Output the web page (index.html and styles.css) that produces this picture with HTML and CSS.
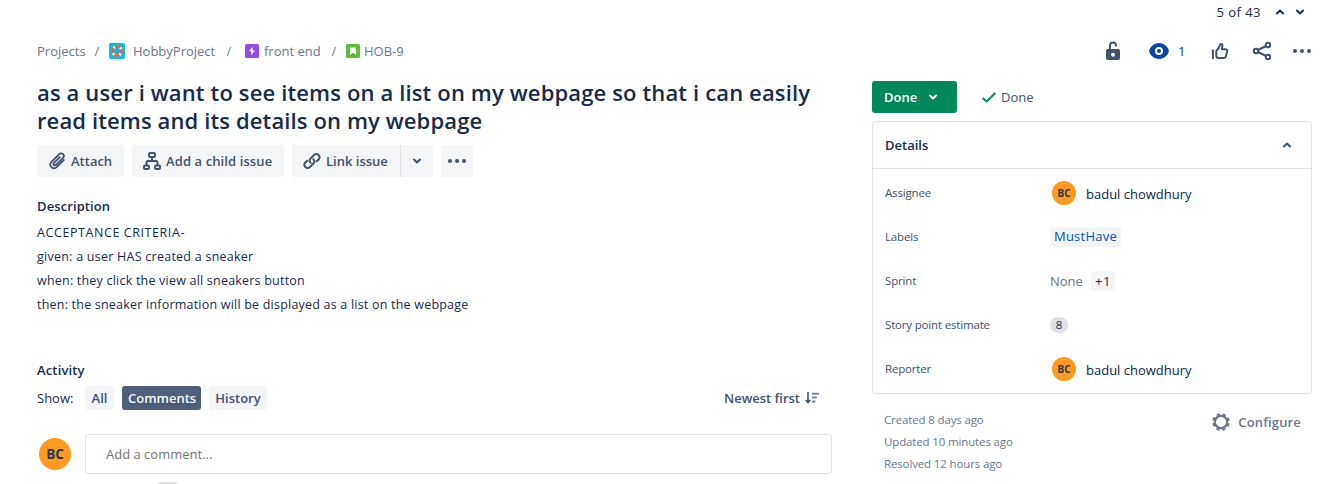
FILE: index.html
```html
<!DOCTYPE html>
<html lang="en">
<head>
<meta charset="utf-8">
<title>HOB-9</title>
<link rel="stylesheet" href="styles.css">
</head>
<body>
<div class="page">
  <div class="pager">
    <span class="pager-text">5 of 43</span>
    <svg class="pager-up" width="10" height="8" viewBox="0 0 10 8"><path d="M2 5.500 5 2.500 8 5.500"/></svg>
    <svg class="pager-down" width="10" height="8" viewBox="0 0 10 8"><path d="M2 2.500 5 5.500 8 2.500"/></svg>
  </div>

  <header class="topbar">
    <nav class="crumbs">
      <span class="crumb c-projects">Projects</span><span class="slash">/</span>
      <svg class="crumb-icon i-hobby" width="16" height="16" viewBox="0 0 16 16"><rect width="16" height="16" rx="2" fill="#00c1e0"/><circle cx="8" cy="8" r="4.500" fill="none" stroke="#ff5a4f" stroke-width="2.800"/><circle cx="8" cy="8" r="4.500" fill="none" stroke="#f4f5f7" stroke-width="2.800" stroke-dasharray="1.800 5.269" stroke-dashoffset="-2.630"/></svg>
      <span class="crumb c-hobby">HobbyProject</span><span class="slash">/</span>
      <svg class="crumb-icon i-epic" width="14" height="14" viewBox="0 0 14 14"><rect width="14" height="14" rx="1.500" fill="#904ee2"/><path d="M7.800 2.800 3.900 7.300H6.400L6.100 11.200 10.100 6.600H7.500Z" fill="#fff"/></svg>
      <span class="crumb c-epic">front end</span><span class="slash">/</span>
      <svg class="crumb-icon i-story" width="14" height="14" viewBox="0 0 14 14"><rect width="14" height="14" rx="1.500" fill="#63ba3c"/><path d="M4 3.500h6v7.600L7 8.400 4 11.100Z" fill="#fff"/></svg>
      <span class="crumb c-key">HOB-9</span>
    </nav>
    <div class="actions">
      <svg class="a-lock" width="16" height="20" viewBox="0 0 16 20"><path d="M5 9V4.500a3 3 0 0 1 6 0V5.500" fill="none" stroke="#42526e" stroke-width="2"/><path fill-rule="evenodd" d="M3 8h10a2 2 0 0 1 2 2v7a2 2 0 0 1-2 2H3a2 2 0 0 1-2-2v-7a2 2 0 0 1 2-2Zm5 3.700a2 2 0 1 0 0 4 2 2 0 0 0 0-4Z" fill="#42526e"/></svg>
      <svg class="a-eye" width="20" height="16" viewBox="0 0 20 16"><path d="M10 0c5 0 9.800 4.500 9.800 8S15 16 10 16 .2 11.500.2 8 5 0 10 0Z" fill="#0747a6"/><circle cx="10" cy="8" r="3" fill="none" stroke="#fff" stroke-width="2"/></svg>
      <span class="watch-count">1</span>
      <svg class="a-like" width="18" height="18" viewBox="0 0 18 18"><g fill="none" stroke="#42526e" stroke-width="2" stroke-linejoin="round"><path d="M1.900 7.500V17"/><path d="M5.300 9V13.500Q5.300 16 7.600 16H12.800Q14.300 16 14.800 14.500L16.200 9.500Q16.700 7.300 14.500 7.200H10.800L11.400 3.600Q11.500 1.700 10 1.900 9.300 2 9 3 8.300 6 5.300 9Z"/></g></svg>
      <svg class="a-share" width="20" height="20" viewBox="0 0 20 20"><g fill="none" stroke="#42526e" stroke-width="2"><circle cx="4" cy="10" r="2.200"/><circle cx="16" cy="4" r="2.200"/><circle cx="16" cy="16" r="2.200"/><path d="M6 9 14 5M6 11 14 15"/></g></svg>
      <svg class="a-more" width="18" height="4" viewBox="0 0 18 4"><g fill="#42526e"><circle cx="2" cy="2" r="2"/><circle cx="9" cy="2" r="2"/><circle cx="16" cy="2" r="2"/></g></svg>
    </div>
  </header>

  <div class="columns">
    <main class="main">
      <h1 class="title"><span class="t1">as a user i want to see items on a list on my webpage so that i can easily</span><br><span class="t2">read items and its details on my webpage</span></h1>
      <div class="toolbar">
        <button class="btn b-attach"><svg width="18" height="18" viewBox="0 0 18 18"><path d="M11.800 5.200 5.800 11.200a1.350 1.350 0 0 0 1.900 1.900L15 5.800a2.600 2.600 0 0 0-3.700-3.700L3.200 10.200a3.700 3.700 0 0 0 5.200 5.200L15.800 8" fill="none" stroke="#42526e" stroke-width="1.800" stroke-linecap="round"/></svg><span>Attach</span></button>
        <button class="btn b-child"><svg width="18" height="18" viewBox="0 0 18 18"><g fill="none" stroke="#42526e" stroke-width="2"><rect x="6" y="1" width="6" height="4" rx="1"/><rect x="1" y="13.500" width="5" height="3.500" rx="1"/><rect x="12" y="13.500" width="5" height="3.500" rx="1"/><path d="M9 5V9M3.500 13.500V10.500Q3.500 9 5 9H13Q14.500 9 14.500 10.500V13.500"/></g></svg><span>Add a child issue</span></button>
        <div class="split">
          <button class="btn b-link"><svg width="18" height="18" viewBox="0 0 18 18"><g fill="none" stroke="#42526e" stroke-width="2" stroke-linecap="round"><path d="M7.700 10.900a3.200 3.200 0 0 1 0-4.500L11.300 2.800a3.200 3.200 0 0 1 4.500 4.500L13.800 9.300"/><path d="M10.300 7.100a3.200 3.200 0 0 1 0 4.500L6.700 15.200a3.200 3.200 0 0 1-4.500-4.500L4.200 8.700"/></g></svg><span>Link issue</span></button>
          <button class="btn b-caret"><svg width="10" height="8" viewBox="0 0 10 8"><path class="chev" d="M2 2.500 5 5.500 8 2.500"/></svg></button>
        </div>
        <button class="btn b-more"><svg width="18" height="4" viewBox="0 0 18 4"><g fill="#42526e"><circle cx="2" cy="2" r="2"/><circle cx="9" cy="2" r="2"/><circle cx="16" cy="2" r="2"/></g></svg></button>
      </div>

      <h2 class="subhead h-desc">Description</h2>
      <div class="desc">
        <p class="d1">ACCEPTANCE CRITERIA-</p>
        <p class="d2">given: a user HAS created a sneaker</p>
        <p class="d3">when: they click the view all sneakers button</p>
        <p class="d4">then: the sneaker information will be displayed as a list on the webpage</p>
      </div>

      <h2 class="subhead h-act">Activity</h2>
      <div class="tabs">
        <span class="show">Show:</span>
        <button class="tab tab-all">All</button>
        <button class="tab tab-comments">Comments</button>
        <button class="tab tab-history">History</button>
        <span class="sort">Newest first</span>
        <svg class="sort-icon" width="14" height="12" viewBox="0 0 14 12"><path d="M3 0V10M.7 8 3 10.500 5.300 8" fill="none" stroke="#42526e" stroke-width="1.600"/><path d="M7 1.700H14M7 5.500H12M7 9.500H10.500" stroke="#7a869a" stroke-width="2"/></svg>
      </div>
      <div class="comment">
        <span class="avatar avatar-lg">BC</span>
        <div class="input">Add a comment...</div>
      </div>
      <div class="key-hint"></div>
    </main>

    <aside class="side">
      <div class="status">
        <button class="status-btn"><span>Done</span><svg width="10" height="8" viewBox="0 0 10 8"><path d="M2 2.500 5 5.500 8 2.500"/></svg></button>
        <svg class="tick" width="14" height="11" viewBox="0 0 14 11"><path d="M.7 6 4.700 9.500 13.300 1" fill="none" stroke="#00875a" stroke-width="2"/></svg>
        <span class="resolution">Done</span>
      </div>
      <section class="panel">
        <div class="panel-head"><span class="panel-title">Details</span><svg width="10" height="8" viewBox="0 0 10 8"><path class="chev" d="M2 5.500 5 2.500 8 5.500"/></svg></div>
        <div class="rows">
          <div class="row"><span class="label">Assignee</span><div class="value person"><span class="avatar">BC</span><span class="name">badul chowdhury</span></div></div>
          <div class="row"><span class="label">Labels</span><div class="value"><span class="tag">MustHave</span></div></div>
          <div class="row"><span class="label">Sprint</span><div class="value"><span class="none">None</span><span class="plus">+1</span></div></div>
          <div class="row"><span class="label">Story point estimate</span><div class="value"><span class="points">8</span></div></div>
          <div class="row"><span class="label">Reporter</span><div class="value person"><span class="avatar">BC</span><span class="name">badul chowdhury</span></div></div>
        </div>
      </section>
      <footer class="meta">
        <div class="dates">
          <div>Created 8 days ago</div>
          <div>Updated 10 minutes ago</div>
          <div>Resolved 12 hours ago</div>
        </div>
        <div class="configure"><svg width="18" height="18" viewBox="0 0 18 18"><circle cx="9" cy="9" r="6.200" fill="none" stroke="#6b778c" stroke-width="2.200"/><circle cx="9" cy="9" r="7.800" fill="none" stroke="#6b778c" stroke-width="2" stroke-dasharray="3.300 2.826" stroke-dashoffset="-1.413"/></svg><span>Configure</span></div>
      </footer>
    </aside>
  </div>
</div>
</body>
</html>
```
FILE: styles.css
```css
* { box-sizing: border-box; }
body { margin: 0; background: #fff; color: #172b4d; font: 13px/20px "Open Sans", "Noto Sans", sans-serif; }
svg { display: block; flex: none; }
button { border: 0; font: inherit; color: inherit; padding: 0; }
h1, h2, p { margin: 0; }
span, p { white-space: nowrap; }
.page { width: 1324px; height: 484px; overflow: hidden; }

.pager { display: flex; align-items: center; justify-content: flex-end; height: 24px; padding-right: 19px; gap: 10px; }
.pager-text { margin-right: 4px; letter-spacing: .45px; }
.pager path { fill: none; stroke: #172b4d; stroke-width: 2; stroke-linecap: round; stroke-linejoin: round; }

.topbar { display: flex; justify-content: space-between; align-items: center; height: 30px; margin-top: 12px; padding: 0 13px 0 37px; }
.crumbs { display: flex; align-items: center; color: #6b778c; }
.c-projects { width: 48px; }
.slash { width: 24px; text-align: center; }
.i-hobby { margin-right: 8px; }
.c-hobby { width: 84px; }
.i-epic { margin: 0 5px 0 4px; }
.c-epic { width: 58px; }
.i-story { margin: 0 4px 0 0; }
.actions { display: flex; align-items: center; }
.a-eye { margin-left: 28px; }
.watch-count { width: 8px; margin: 0 25px 0 9px; color: #0747a6; }
.a-share { margin: 0 21px 0 23px; }

.columns { display: flex; padding-left: 37px; gap: 40px; }
.main { width: 795px; padding-top: 12px; }
.title { font-size: 22px; line-height: 28px; font-weight: 600; height: 56px; }
.t1 { letter-spacing: .14px; }
.t2 { letter-spacing: .12px; }
.toolbar { display: flex; gap: 8px; margin-top: 11px; }
.btn { display: flex; align-items: center; height: 32px; padding-left: 11px; gap: 5px; background: #f4f5f7; border-radius: 3px; color: #42526e; font-weight: 600; }
.b-attach { width: 87px; }
.b-child { width: 152px; letter-spacing: .1px; }
.split { display: flex; gap: 1px; background: #dfe1e6; border-radius: 3px; }
.b-link { width: 108px; border-radius: 3px 0 0 3px; }
.b-caret { width: 32px; border-radius: 0 3px 3px 0; }
.b-more { width: 32px; padding-left: 7px; }
.chev { fill: none; stroke: #42526e; stroke-width: 2; stroke-linecap: round; stroke-linejoin: round; }
.subhead { font-size: 13px; line-height: 20px; font-weight: 600; }
.h-desc { margin-top: 19px; letter-spacing: .1px; }
.desc { margin-top: 5px; font-size: 12.500px; line-height: 24px; letter-spacing: .21px; }
.d1 { letter-spacing: .58px; }
.d2 { letter-spacing: .25px; }
.h-act { margin-top: 43px; letter-spacing: .15px; }
.tabs { display: flex; align-items: center; height: 24px; margin-top: 6px; }
.show { width: 48px; }
.tab { height: 24px; padding: 0 6px; border-radius: 3px; background: #f4f5f7; color: #42526e; font-weight: 600; margin-right: 8px; text-align: center; }
.tab-all { width: 29px; }
.tab-comments { width: 79px; background: #505f79; color: #f4f5f7; }
.tab-history { width: 58px; }
.sort { margin-left: auto; margin-right: 5px; font-weight: 600; color: #42526e; }
.sort-icon { margin-right: 13px; }
.comment { display: flex; align-items: center; gap: 14px; margin-top: 24px; padding-left: 2px; }
.input { flex: 1; height: 40px; border: 1px solid #dfe1e6; border-radius: 3px; padding-left: 20px; line-height: 38px; color: #757575; }
.avatar { width: 24px; height: 24px; border-radius: 50%; background: #ff991f; color: #253858; font-size: 10px; line-height: 24px; font-weight: 700; text-align: center; flex: none; }
.avatar-lg { width: 32px; height: 32px; line-height: 32px; font-size: 13.500px; }
.key-hint { width: 21px; height: 18px; margin: 8px 0 0 120px; border-radius: 3px; background: #dfe1e6; }

.side { width: 440px; padding-top: 15px; }
.status { display: flex; align-items: center; height: 32px; }
.status-btn { display: flex; align-items: center; width: 85px; height: 32px; padding-left: 12px; gap: 11px; border-radius: 3px; background: #00875a; color: #fff; font-weight: 600; }
.status-btn path { fill: none; stroke: #fff; stroke-width: 2; stroke-linecap: round; stroke-linejoin: round; }
.tick { margin: 0 5px 0 25px; }
.resolution { color: #42526e; }
.panel { margin-top: 8px; border: 1px solid #dfe1e6; border-radius: 4px; height: 273px; }
.panel-head { display: flex; align-items: center; justify-content: space-between; height: 47px; padding: 0 19px 0 12px; border-bottom: 1px solid #dfe1e6; font-weight: 600; }
.rows { padding-top: 2px; }
.row { display: flex; align-items: center; height: 44px; padding-left: 12px; }
.label { width: 165px; font-size: 11.500px; letter-spacing: -.17px; color: #42526e; }
.value { display: flex; align-items: center; }
.person { padding-left: 2px; gap: 10px; }
.name { color: #091e42; position: relative; top: 1px; }
.tag { width: 71px; height: 20px; border-radius: 3px; background: #f4f5f7; color: #0052cc; text-align: center; line-height: 19px; letter-spacing: .25px; }
.none { width: 41px; color: #6b778c; }
.plus { width: 24px; height: 20px; border-radius: 3px; background: #f4f5f7; text-align: center; letter-spacing: .5px; }
.points { width: 18px; height: 16px; border-radius: 8px; background: #dfe1e6; font-size: 11.500px; line-height: 16px; text-align: center; }
.meta { display: flex; justify-content: space-between; padding: 15px 11px 0 12px; color: #6b778c; }
.dates { font-size: 11.500px; line-height: 22px; letter-spacing: -.14px; }
.configure { display: flex; align-items: center; height: 26px; gap: 8px; font-weight: 600; letter-spacing: .16px; }
```
